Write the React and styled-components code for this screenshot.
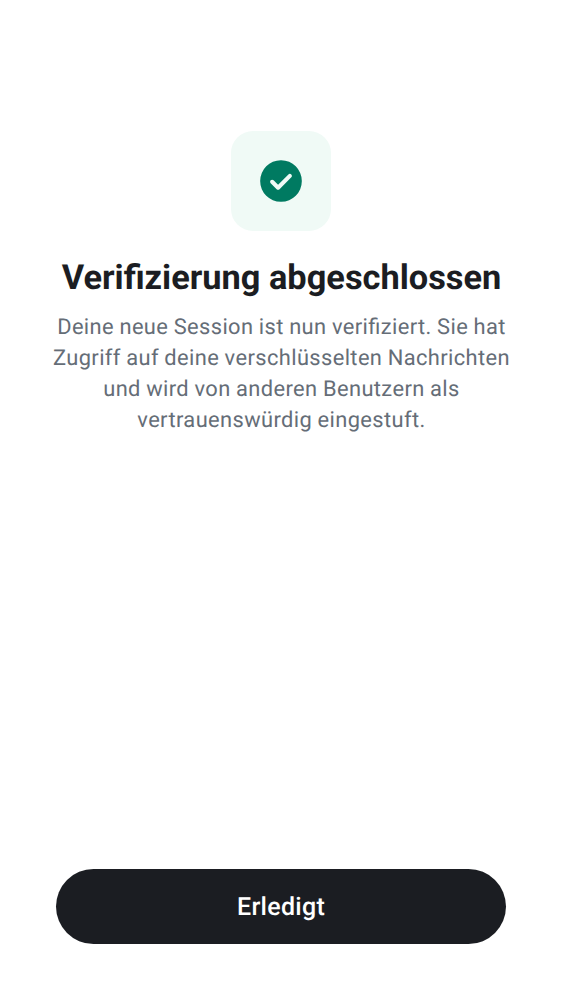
import React from "react";
import styled, { createGlobalStyle } from "styled-components";

const GlobalStyle = createGlobalStyle`
  * { box-sizing: border-box; }
  body {
    margin: 0;
    background: #fff;
    font-family: Roboto, sans-serif;
    text-rendering: geometricPrecision;
  }
`;

const Screen = styled.main`
  display: flex;
  flex-direction: column;
  align-items: center;
  height: 1000px;
  padding: 131px 25px 56px;
`;

const IconTile = styled.div`
  display: flex;
  align-items: center;
  justify-content: center;
  width: 100px;
  height: 100px;
  border-radius: 22px;
  background: #f0faf6;
`;

const Title = styled.h1`
  margin: 25px 0 0;
  padding-left: 1px;
  font-size: 34.375px;
  line-height: 44px;
  font-weight: 700;
  letter-spacing: 0;
  color: #1b1d22;
  white-space: nowrap;
`;

const Message = styled.p`
  margin: 12px 0 0;
  padding-left: 1px;
  font-size: 21.875px;
  line-height: 31px;
  letter-spacing: 0.39px;
  word-spacing: -0.4px;
  font-feature-settings: "liga" 1;
  text-align: center;
  color: #656d77;
  white-space: nowrap;
`;

const DoneButton = styled.button`
  width: 450px;
  height: 75px;
  margin-top: auto;
  padding: 1px 0 0;
  border: 0;
  border-radius: 38px;
  background: #1b1d22;
  color: #fff;
  font: 500 25px/37px Roboto, sans-serif;
  letter-spacing: 0.3px;
  text-rendering: geometricPrecision;
`;

export default function App() {
  return (
    <>
      <GlobalStyle />
      <Screen>
        <IconTile>
          <svg width="50" height="50" viewBox="0 0 24 24" aria-hidden="true">
            <path
              fill="#007a61"
              fillRule="evenodd"
              d="M10.6 13.8l-2.15-2.15a.95.95 0 0 0-.7-.275.95.95 0 0 0-.7.275.95.95 0 0 0-.275.7c0 .283.092.517.275.7L9.9 15.9c.2.2.433.3.7.3s.5-.1.7-.3l5.65-5.65a.95.95 0 0 0 .275-.7.95.95 0 0 0-.275-.7.95.95 0 0 0-.7-.275.95.95 0 0 0-.7.275zM12 22a9.74 9.74 0 0 1-3.9-.788 10.1 10.1 0 0 1-3.175-2.137 10.1 10.1 0 0 1-2.137-3.175A9.74 9.74 0 0 1 2 12a9.74 9.74 0 0 1 .788-3.9 10.1 10.1 0 0 1 2.137-3.175A10.1 10.1 0 0 1 8.1 2.788 9.74 9.74 0 0 1 12 2a9.74 9.74 0 0 1 3.9.788 10.1 10.1 0 0 1 3.175 2.137A10.1 10.1 0 0 1 21.212 8.1 9.74 9.74 0 0 1 22 12a9.74 9.74 0 0 1-.788 3.9 10.1 10.1 0 0 1-2.137 3.175 10.1 10.1 0 0 1-3.175 2.137A9.74 9.74 0 0 1 12 22z"
            />
          </svg>
        </IconTile>
        <Title>Verifizierung abgeschlossen</Title>
        <Message>
          Deine neue Session ist nun verifiziert. Sie hat<br />
          Zugriff auf deine verschlüsselten Nachrichten<br />
          und wird von anderen Benutzern als<br />
          vertrauenswürdig eingestuft.
        </Message>
        <DoneButton type="button">Erledigt</DoneButton>
      </Screen>
    </>
  );
}
